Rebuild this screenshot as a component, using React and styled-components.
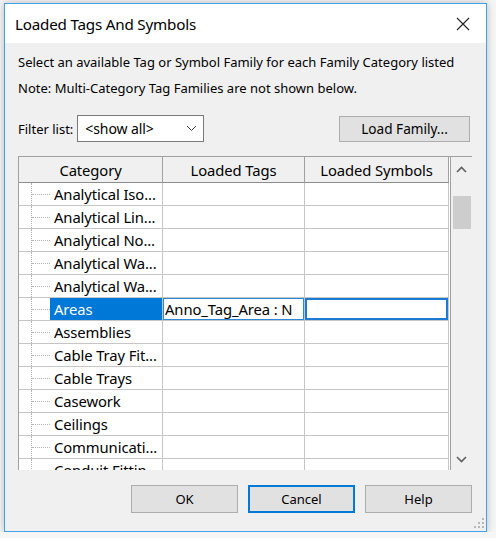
import React from 'react'
import styled, { createGlobalStyle } from 'styled-components'

const GlobalStyle = createGlobalStyle`
  html, body {
    margin: 0;
    padding: 0;
    background: #f6f6f6;
  }
  body {
    font-family: "Noto Sans", "Open Sans", sans-serif;
    color: #000;
  }
`

const Window = styled.div`
  margin: 3px 0 0 4px;
  width: 483px;
  height: 529px;
  box-sizing: border-box;
  border: 1px solid #3ea3ea;
  background: #f0f0f0;
  box-shadow: 0 0 8px rgba(0, 0, 0, .25);
  display: flex;
  flex-direction: column;
`

const TitleBar = styled.div`
  height: 39px;
  background: #fff;
  display: flex;
  align-items: center;
  justify-content: space-between;
  padding: 0 16px 0 10px;
  flex-shrink: 0;
`

const Title = styled.span`
  font-size: 15.2px;
  letter-spacing: -0.2px;
  color: #000;
`

const Body = styled.div`
  flex: 1;
  display: flex;
  flex-direction: column;
  padding: 6px 14px 0 13px;
  font-size: 13px;
  position: relative;
`

const Note = styled.div`
  height: 26px;
  line-height: 26px;
  white-space: nowrap;
`

const FilterRow = styled.div`
  display: flex;
  align-items: center;
  margin-top: 14px;
  height: 27px;
`

const Label = styled.span`
  margin-right: 4px;
`

const Select = styled.div`
  width: 127px;
  height: 27px;
  box-sizing: border-box;
  border: 1px solid #7a7a7a;
  background: #fff;
  display: flex;
  align-items: center;
  justify-content: space-between;
  padding: 0 6px 0 7px;
  font-size: 14px;
  letter-spacing: -0.1px;
`

const Button = styled.button`
  font-family: inherit;
  font-size: ${p => p.$fontSize || 13}px;
  color: #000;
  width: ${p => p.$width || 107}px;
  height: ${p => p.$height || 28}px;
  box-sizing: border-box;
  background: #e1e1e1;
  border: ${p => (p.$focused ? '2px solid #0078d7' : '1px solid #adadad')};
  padding: 0;
  margin: 0;
`

const Spacer = styled.div`
  flex: 1;
`

const GridBox = styled.div`
  margin-top: 14px;
  height: 314px;
  display: flex;
  box-sizing: border-box;
  overflow: hidden;
`

const Table = styled.div`
  width: 432px;
  box-sizing: border-box;
  border-left: 1px solid #a0a0a0;
  border-top: 1px solid #a0a0a0;
  background: #fff;
  overflow: hidden;
  display: grid;
  grid-template-columns: 144px 142px 144px;
  grid-auto-rows: 23px;
  grid-template-rows: 26px;
  align-content: start;
  font-size: 14.8px;
  letter-spacing: -0.1px;
`

const HeaderCell = styled.div`
  background: #f0f0f0;
  border-right: 1px solid #a0a0a0;
  border-bottom: 1px solid #8c8c8c;
  display: flex;
  align-items: center;
  justify-content: center;
`

const Cell = styled.div`
  box-sizing: border-box;
  border-right: 1px solid #c6c6c6;
  border-bottom: 1px solid #c6c6c6;
  display: flex;
  align-items: stretch;
  overflow: hidden;
  white-space: nowrap;
  position: relative;
`

const CategoryCell = styled(Cell)`
  padding-left: 12px;
`

const TreeLine = styled.span`
  width: 18px;
  flex-shrink: 0;
  border-left: 1px dotted #b4b4b4;
  position: relative;
  &::after {
    content: '';
    position: absolute;
    left: 0;
    right: 0;
    top: 50%;
    border-top: 1px dotted #b4b4b4;
  }
`

const CategoryLabel = styled.span`
  display: flex;
  align-items: center;
  padding: 0 4px;
  background: ${p => (p.$selected ? '#0078d7' : 'transparent')};
  color: ${p => (p.$selected ? '#fff' : '#000')};
  flex: ${p => (p.$selected ? 1 : 'none')};
`

const ValueCell = styled(Cell)`
  align-items: center;
  padding-left: 2px;
  box-shadow: ${p =>
    p.$focus === 2
      ? 'inset 0 0 0 2px #1a7ad4'
      : p.$focus === 1
      ? 'inset 0 0 0 1px #2a86d8'
      : 'none'};
`

const Scrollbar = styled.div`
  width: 22px;
  box-sizing: border-box;
  border-top: 1px solid #a0a0a0;
  border-left: 1px solid #a0a0a0;
  background: #f0f0f0;
  display: flex;
  flex-direction: column;
  align-items: center;
`

const ScrollArrow = styled.div`
  height: ${p => (p.$bottom ? 22 : 25)}px;
  width: 100%;
  display: flex;
  align-items: center;
  justify-content: center;
  margin-top: ${p => (p.$bottom ? 'auto' : '0')};
`

const Thumb = styled.div`
  width: 18px;
  height: 33px;
  background: #cdcdcd;
  margin-top: 14px;
`

const ButtonRow = styled.div`
  display: flex;
  justify-content: flex-end;
  gap: 10px;
  margin-top: 15px;
`

const Grip = styled.svg`
  position: absolute;
  right: 2px;
  bottom: 3px;
`

const rows = [
  'Analytical Iso...',
  'Analytical Lin...',
  'Analytical No...',
  'Analytical Wa...',
  'Analytical Wa...',
  'Areas',
  'Assemblies',
  'Cable Tray Fit...',
  'Cable Trays',
  'Casework',
  'Ceilings',
  'Communicati...',
  'Conduit Fittin...',
]

const Chevron = ({ up }) => (
  <svg width="11" height="7" viewBox="0 0 11 7">
    <path
      d={up ? 'M1 6 L5.5 1.5 L10 6' : 'M1 1 L5.5 5.5 L10 1'}
      fill="none"
      stroke="#606060"
      strokeWidth="1.6"
    />
  </svg>
)

export default function App() {
  return (
    <>
      <GlobalStyle />
      <Window>
        <TitleBar>
          <Title>Loaded Tags And Symbols</Title>
          <svg width="14" height="14" viewBox="0 0 14 14">
            <path d="M1 1 L13 13 M13 1 L1 13" stroke="#222" strokeWidth="1.1" />
          </svg>
        </TitleBar>

        <Body>
          <Note>Select an available Tag or Symbol Family for each Family Category listed</Note>
          <Note>Note: Multi-Category Tag Families are not shown below.</Note>

          <FilterRow>
            <Label>Filter list:</Label>
            <Select>
              <span>&lt;show all&gt;</span>
              <svg width="11" height="7" viewBox="0 0 11 7">
                <path d="M1 1 L5.5 5.5 L10 1" fill="none" stroke="#444" strokeWidth="1" />
              </svg>
            </Select>
            <Spacer />
            <Button $width={131} $height={26} $fontSize={13.6} style={{ marginRight: 2 }}>
              Load Family...
            </Button>
          </FilterRow>

          <GridBox>
            <Table>
              <HeaderCell>Category</HeaderCell>
              <HeaderCell>Loaded Tags</HeaderCell>
              <HeaderCell>Loaded Symbols</HeaderCell>
              {rows.map((name, i) => {
                const selected = name === 'Areas'
                return (
                  <React.Fragment key={i}>
                    <CategoryCell>
                      <TreeLine />
                      <CategoryLabel $selected={selected}>{name}</CategoryLabel>
                    </CategoryCell>
                    <ValueCell $focus={selected ? 1 : 0}>
                      {selected ? 'Anno_Tag_Area : N' : ''}
                    </ValueCell>
                    <ValueCell $focus={selected ? 2 : 0} />
                  </React.Fragment>
                )
              })}
            </Table>
            <Scrollbar>
              <ScrollArrow>
                <Chevron up />
              </ScrollArrow>
              <Thumb />
              <ScrollArrow $bottom>
                <Chevron />
              </ScrollArrow>
            </Scrollbar>
          </GridBox>

          <ButtonRow>
            <Button>OK</Button>
            <Button $focused>Cancel</Button>
            <Button>Help</Button>
          </ButtonRow>

          <Grip width="10" height="10" viewBox="0 0 10 10">
            <g fill="#b8b8b8">
              <rect x="8" y="0" width="2" height="2" />
              <rect x="4" y="4" width="2" height="2" />
              <rect x="8" y="4" width="2" height="2" />
              <rect x="0" y="8" width="2" height="2" />
              <rect x="4" y="8" width="2" height="2" />
              <rect x="8" y="8" width="2" height="2" />
            </g>
          </Grip>
        </Body>
      </Window>
    </>
  )
}
